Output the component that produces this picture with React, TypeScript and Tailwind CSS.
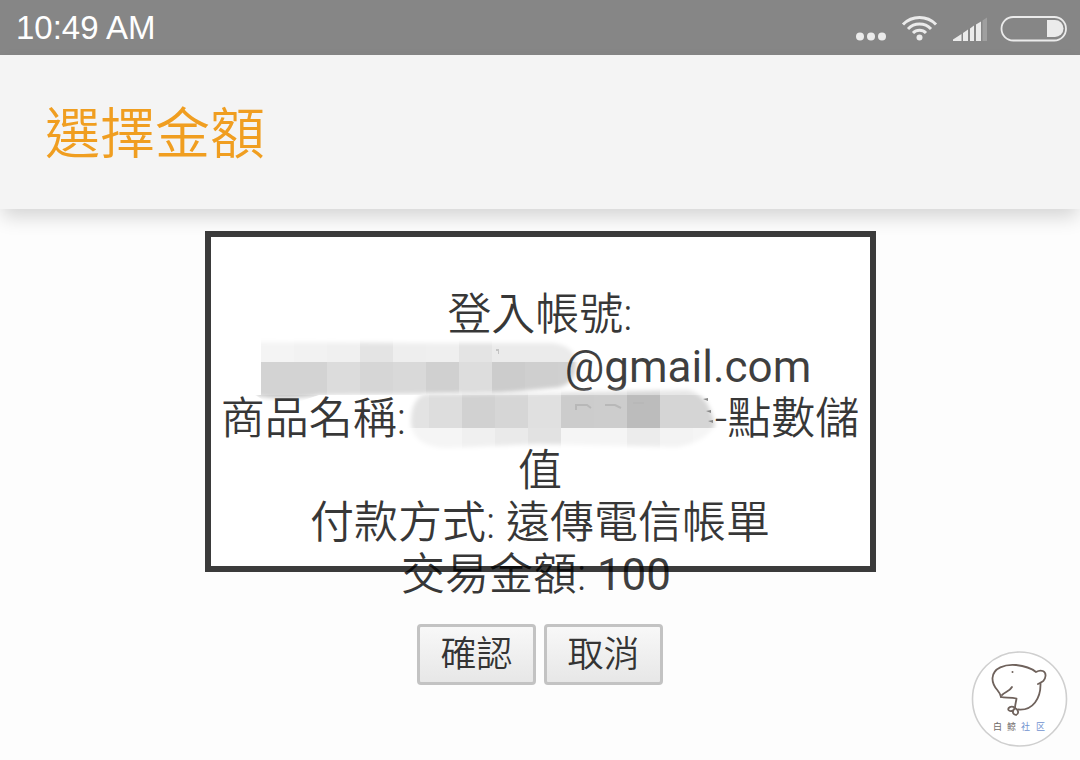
import React from 'react';

// Cells are 33px wide, colours listed left to right
const accountTop = ['#f4f4f4', '#f2f2f2', '#f0f0f0', '#e4e4e4', '#eeeeee', '#efefef', '#e4e4e4', '#ebebeb', '#ebebeb', '#ebebeb'];
const accountBottom = ['#d3d3d3', '#d3d3d3', '#dcdcdc', '#d6d6d6', '#d9d9d9', '#d0d0d0', '#dddddd', '#cccccc', '#cfcfcf', '#d0d0d0'];
const productTop = ['#e3e3e3', '#dddddd', '#d1d1d1', '#d6d6d6', '#e0e0e0', '#cccccc', '#cdcdcd', '#bcbcbc', '#d5d5d5', '#d5d5d5'];
const productBottom = ['#f5f5f5', '#f5f5f5', '#f0f0f0', '#eaeaea', '#e2e2e2', '#f5f5f5', '#f5f5f5', '#ececec', '#f3f3f3', '#f5f5f5'];

function Cells({ colors, x, y, height }: { colors: string[]; x: number; y: number; height: number }) {
  return (
    <>
      {colors.map((fill, i) => (
        <rect key={i} x={x + i * 33} y={y} width="33" height={height} fill={fill} shapeRendering="crispEdges" />
      ))}
    </>
  );
}

function AccountMask() {
  return (
    <svg className="inline-block align-top overflow-visible" width="304" height="52" viewBox="0 0 304 52" aria-hidden="true">
      <defs>
        <filter id="accountSoft" x="-10%" y="-30%" width="120%" height="160%">
          <feGaussianBlur stdDeviation="2" />
        </filter>
        <mask id="accountMask" maskUnits="userSpaceOnUse" x="-10" y="-10" width="350" height="80">
          <path
            d="M-10 1 L180 2 H290 Q315 4 315 24 Q314 46 292 47 L240 52 L60 54 Q24 60 -4 55 Z"
            fill="#fff"
            filter="url(#accountSoft)"
          />
        </mask>
      </defs>
      <g mask="url(#accountMask)">
        <Cells colors={accountTop} x={0} y={-4} height={25} />
        <Cells colors={accountBottom} x={0} y={21} height={33} />
        <path d="M-6 54 H58 L40 60 H4Z" fill="#c8c8c8" />
        <path d="M235 8 H238 V13 H237 V10 H235Z" fill="#c4c4c4" />
      </g>
    </svg>
  );
}

function ProductMask() {
  return (
    <svg className="inline-block align-top overflow-visible" width="298" height="52" viewBox="0 0 298 52" aria-hidden="true">
      <defs>
        <filter id="productSoft" x="-10%" y="-30%" width="120%" height="160%">
          <feGaussianBlur stdDeviation="2" />
        </filter>
        <mask id="productMask" maskUnits="userSpaceOnUse" x="-20" y="-10" width="340" height="80">
          <path
            d="M8 1 L120 0 L270 -3 Q292 0 298 33 Q286 50 260 54 L120 51 L30 55 Q-4 54 -6 30 Q-6 6 8 1Z"
            fill="#fff"
            filter="url(#productSoft)"
          />
        </mask>
      </defs>
      <g mask="url(#productMask)">
        <Cells colors={productTop} x={-21} y={-8} height={43} />
        <Cells colors={productBottom} x={-21} y={35} height={24} />
        <rect x="-21" y="-8" width="330" height="10" fill="#fff" fillOpacity="0.4" />
        <path d="M159 17 V12 H170 L174 15 M188 12 H198 L204 15 M216 10 H227" fill="none" stroke="#b8b8b8" strokeWidth="2" />
      </g>
      <path d="M286 6 L291 5 V8Z M289 18 L294 17 V20Z M291 28 L296 27 V30Z" fill="#888" />
    </svg>
  );
}

function StatusBar() {
  return (
    <div className="flex h-[55px] items-center justify-between bg-[#868686] pl-4 pr-3">
      <span className="font-['Liberation_Sans',sans-serif] text-[33px] leading-8 font-normal text-white">10:49 AM</span>
      <svg width="212" height="30" viewBox="856 12 212 30" fill="none" aria-hidden="true">
        <g fill="#ebebeb">
          <circle cx="860" cy="35.500" r="4" />
          <circle cx="871" cy="35.500" r="4" />
          <circle cx="882" cy="35.500" r="4" />
          <circle cx="919.500" cy="36.500" r="3" />
          <path d="M953 40 V38.500 L961.500 33 V40Z" />
          <path d="M963 32 L968 28.500 V40 H963Z" />
          <path d="M970 27.500 L974 24.500 V40 H970Z" />
          <path d="M976 23.500 L981 20.500 V40 H976Z" />
          <path d="M982.500 19.500 L987 16.500 V40 H982.500Z" fillOpacity="0.25" />
          <path d="M1047 19 H1055 A8.500 8.500 0 0 1 1055 36 H1047Z" />
        </g>
        <g stroke="#ebebeb" strokeWidth="3">
          <path d="M903 23.500 A23 23 0 0 1 936 23.500" />
          <path d="M908 28 A16 16 0 0 1 931 28" />
          <path d="M913 32 A9 9 0 0 1 926 32" />
        </g>
        <rect x="1001.500" y="16" width="64.500" height="23.500" rx="11.700" stroke="#ebebeb" strokeWidth="1.800" />
      </svg>
    </div>
  );
}

function Badge() {
  return (
    <svg className="absolute bottom-3 right-3 h-[98px] w-[98px]" viewBox="971 650 98 98" role="img" aria-label="白鲸社区">
      <circle cx="1020.500" cy="699" r="47" fill="#fff" stroke="#cfcfcf" strokeWidth="1.600" />
      <g fill="none" stroke="#6f625c" strokeWidth="1.800" strokeLinecap="round" strokeLinejoin="round">
        <path d="M1002 697 C1001 690 993 688 993.500 678 C994 668 1006 664 1017 665 C1026 666 1032 668 1037 672 C1042 669 1047 671 1046.500 676 C1046 681 1043 682 1039 684 M1041.500 683 C1042 698 1034 711 1019 709.500" />
        <path d="M1003 695 C1006 692 1011 691 1013 687 M1002 697 C1006 698 1012 697 1017.500 698.500 C1017 702 1016 705 1016 708" />
        <path d="M1016 708 C1012 705 1008.500 708 1009.500 710 C1011 712 1015 711 1016 708 C1020 710 1020 714 1017 715 C1013 714 1013 711 1016 708Z" />
      </g>
      <circle cx="1013.500" cy="672" r="1" fill="#6f625c" />
      <g fontSize="9" fontFamily="'Noto Sans CJK SC', sans-serif" fontWeight="400" fill="#6f6a68">
        <text x="994" y="730">白</text>
        <text x="1008" y="730">鲸</text>
        <text x="1022" y="730" fill="#7192cf">社</text>
        <text x="1037" y="730" fill="#7192cf">区</text>
      </g>
    </svg>
  );
}

const buttonClass =
  'h-[61px] w-[119px] rounded-[4px] border-[3px] border-[#c3c3c3] bg-linear-to-b from-[#f8f8f8] to-[#e7e7e7] text-[36px] leading-none text-black/80';

export default function App() {
  return (
    <div className="relative min-h-screen bg-[#fdfdfd] font-[Roboto,'Noto_Sans_CJK_TC',sans-serif] font-[350]">
      <StatusBar />
      <header className="relative flex h-[154px] items-center bg-[#f4f4f4] px-[45px] pt-1 shadow-[0_10px_18px_-2px_rgba(0,0,0,0.16)]">
        <h1 className="text-[55px] leading-none font-[350] text-[#f09e20]">選擇金額</h1>
      </header>

      <main className="flex flex-col items-center pt-[22px]">
        {/* Fixed height: the last line runs over the bottom border */}
        <section className="relative h-[341px] w-[671px] border-[6px] border-black/77 bg-white bg-clip-padding pt-[52px] text-center text-[44px] leading-[52px] whitespace-nowrap text-black/78">
          <p>登入帳號:</p>
          <p className="pr-2">
            <AccountMask />
            <span className="font-normal text-black/75">@gmail.com</span>
          </p>
          <p>
            商品名稱: <ProductMask />-點數儲
          </p>
          <p>值</p>
          <p>付款方式: 遠傳電信帳單</p>
          <p className="pr-2">
            交易金額: <span className="font-normal text-black/75">100</span>
          </p>
        </section>

        <div className="mt-[52px] flex gap-2">
          <button type="button" className={buttonClass}>確認</button>
          <button type="button" className={buttonClass}>取消</button>
        </div>
      </main>

      <Badge />
    </div>
  );
}
